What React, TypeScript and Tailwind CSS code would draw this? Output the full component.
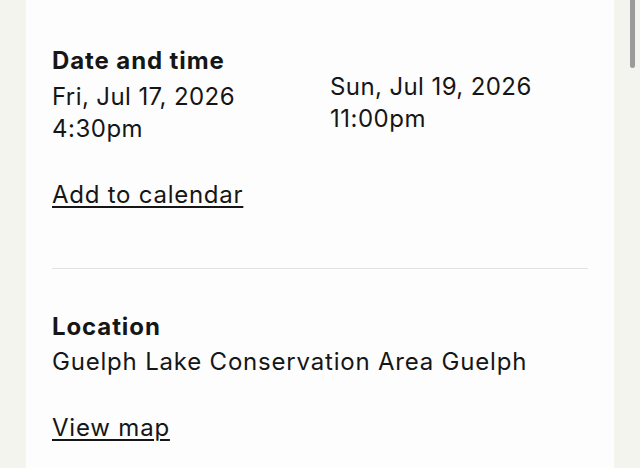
import React from 'react';

const font = { fontFamily: 'Inter, "Noto Sans", sans-serif' };

export default function App() {
  return (
    <div className="relative flex h-[468px] w-[640px] overflow-hidden bg-[#f4f4ef] text-[#161616]" style={font}>
      <div className="ml-[26px] w-[588px] bg-[#fdfdfd] px-[26px] pt-[45px]">
        {/* Date and time */}
        <div className="grid grid-cols-2 gap-x-5">
          <div>
            <h2 className="text-[24px] font-bold leading-[32px] tracking-[0.9px]">Date and time</h2>
            <p className="mt-[4px] text-[24px] leading-[32px] tracking-[0.4px]">Fri, Jul 17, 2026</p>
            <p className="text-[24px] leading-[32px] tracking-[0.5px]">4:30pm</p>
          </div>
          <div className="pt-[26px]">
            <p className="text-[24px] leading-[32px] tracking-[0.4px]">Sun, Jul 19, 2026</p>
            <p className="text-[24px] leading-[32px] tracking-[0.5px]">11:00pm</p>
          </div>
        </div>
        <a href="#" className="mt-[34px] inline-block text-[24px] leading-[32px] tracking-[0.75px] underline decoration-[1.5px] underline-offset-[3px]">
          Add to calendar
        </a>
        <div className="mt-[57px] h-px bg-[#e2e2df]" />

        {/* Location */}
        <div className="pt-[42px]">
          <h2 className="text-[24px] font-bold leading-[32px] tracking-[0.9px]">Location</h2>
          <p className="mt-[3px] text-[24px] leading-[32px] tracking-[0.8px]">Guelph Lake Conservation Area Guelph</p>
          <a href="#" className="mt-[34px] inline-block text-[24px] leading-[32px] tracking-[0.8px] underline decoration-[1.5px] underline-offset-[3px]">
            View map
          </a>
        </div>
      </div>
      {/* scrollbar thumb */}
      <div className="absolute right-[5px] top-0 h-[68px] w-[5px] rounded-b-full bg-[#9b9b9b]" />
    </div>
  );
}
